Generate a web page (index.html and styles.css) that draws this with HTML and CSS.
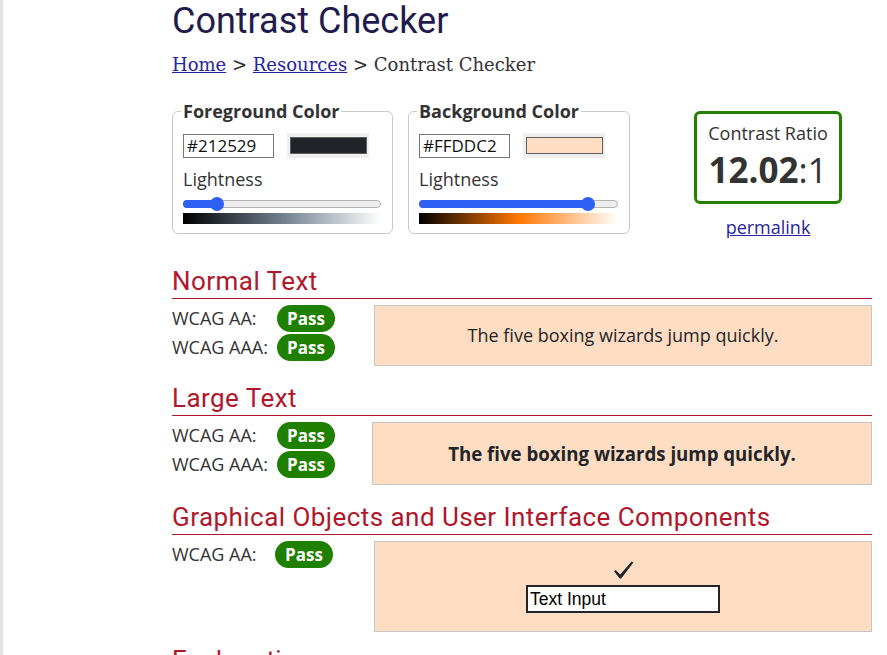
FILE: index.html
```html
<!DOCTYPE html>
<html lang="en">
<head>
<meta charset="utf-8">
<title>Contrast Checker</title>
<link rel="stylesheet" href="styles.css">
</head>
<body>
<main class="page">
  <h1 class="title">Contrast Checker</h1>
  <nav class="crumbs"><a href="#">Home</a> &gt; <a href="#">Resources</a> &gt; Contrast Checker</nav>

  <div class="picker-row">
    <fieldset class="picker">
      <legend>Foreground Color</legend>
      <div class="picker-inputs">
        <input class="hex" type="text" value="#212529">
        <div class="swatch"><span class="swatch-chip" style="background:#212529"></span></div>
      </div>
      <div class="label">Lightness</div>
      <div class="slider">
        <div class="slider-fill" style="width:calc((100% - 14px) * .15 + 7px)"></div>
        <div class="slider-thumb" style="left:calc((100% - 14px) * .15)"></div>
      </div>
      <div class="ramp ramp-fg"></div>
    </fieldset>

    <fieldset class="picker picker-bg">
      <legend>Background Color</legend>
      <div class="picker-inputs">
        <input class="hex" type="text" value="#FFDDC2">
        <div class="swatch"><span class="swatch-chip" style="background:#FFDDC2"></span></div>
      </div>
      <div class="label">Lightness</div>
      <div class="slider">
        <div class="slider-fill" style="width:calc((100% - 14px) * .885 + 7px)"></div>
        <div class="slider-thumb" style="left:calc((100% - 14px) * .885)"></div>
      </div>
      <div class="ramp ramp-bg"></div>
    </fieldset>

    <div class="ratio-col">
      <div class="ratio-box">
        <div class="ratio-label">Contrast Ratio</div>
        <div class="ratio-value"><b>12.02</b>:1</div>
      </div>
      <a class="permalink" href="#">permalink</a>
    </div>
  </div>

  <section class="section section-first">
    <h2 class="section-title">Normal Text</h2>
    <div class="result-row">
      <div class="verdicts">
        <span class="verdict-label">WCAG AA:</span><span class="badge">Pass</span>
        <span class="verdict-label">WCAG AAA:</span><span class="badge">Pass</span>
      </div>
      <div class="sample">The five boxing wizards jump quickly.</div>
    </div>
  </section>

  <section class="section">
    <h2 class="section-title">Large Text</h2>
    <div class="result-row">
      <div class="verdicts verdicts-large">
        <span class="verdict-label">WCAG AA:</span><span class="badge">Pass</span>
        <span class="verdict-label">WCAG AAA:</span><span class="badge">Pass</span>
      </div>
      <div class="sample sample-large">The five boxing wizards jump quickly.</div>
    </div>
  </section>

  <section class="section">
    <h2 class="section-title">Graphical Objects and User Interface Components</h2>
    <div class="result-row">
      <div class="verdicts verdicts-ui">
        <span class="verdict-label">WCAG AA:</span><span class="badge">Pass</span>
      </div>
      <div class="sample sample-ui">
        <svg class="check" width="21" height="18" viewBox="0 0 21 18" aria-hidden="true">
          <path d="M1 10.2 L2.6 8.9 L7.2 13.4 L18.6 0.6 L20.4 1.6 L8.2 17.6 L6.6 17.6 Z" fill="#212529"/>
        </svg>
        <input class="ui-input" type="text" value="Text Input">
      </div>
    </div>
  </section>

  <section class="section section-last">
    <h2 class="section-title">Explanation</h2>
  </section>
</main>
</body>
</html>
```

FILE: styles.css
```css
* {
  box-sizing: border-box;
}

html,
body {
  margin: 0;
  padding: 0;
  background: #fff;
}

body {
  font-family: "Open Sans", "Liberation Sans", sans-serif;
  font-size: 18px;
  color: #333;
  border-left: 3px solid #e3e3e3;
  min-height: 100vh;
}

.page {
  margin-left: 169px;
  width: 700px;
}

.title {
  margin: 0;
  font-family: Roboto, "Liberation Sans", sans-serif;
  font-weight: 400;
  font-size: 36px;
  line-height: 43px;
  color: #1f1b4f;
}

.crumbs {
  margin-top: 11px;
  font-family: "DejaVu Serif", "Liberation Serif", serif;
  font-size: 18px;
  line-height: 21px;
  color: #333;
}

.crumbs a {
  color: #2525a0;
}

/* colour pickers */
.picker-row {
  display: flex;
  align-items: flex-start;
  margin-top: 24px;
}

.picker {
  margin: 0;
  width: 221px;
  border: 1px solid #c9c9c9;
  border-radius: 6px;
  padding: 10px 11px 9px 10px;
  min-width: 0;
}

.picker-bg {
  margin-left: 15px;
  width: 222px;
}

.picker legend {
  padding: 0 2px;
  margin-left: -2px;
  font-weight: 700;
  font-size: 18px;
  color: #333;
}

.picker-inputs {
  display: flex;
  align-items: center;
  gap: 13px;
}

.hex {
  width: 91px;
  height: 24px;
  margin: 0;
  padding: 0 3px;
  border: 1px solid #767676;
  border-radius: 0;
  font-family: "Open Sans", "Liberation Sans", sans-serif;
  font-size: 17px;
  color: #111;
  background: #fff;
}

.swatch {
  display: flex;
  width: 82px;
  height: 25px;
  padding: 4px 2px 4px 3px;
  background: #efefef;
}

.swatch-chip {
  flex: 1;
  border: 1px solid #5f5f5f;
}

.label {
  margin-top: 9px;
  line-height: 24px;
}

.slider {
  position: relative;
  margin-top: 9px;
  height: 8px;
  border: 1px solid #b3b3b3;
  border-radius: 4px;
  background: #ececec;
}

.slider-fill {
  height: 8px;
  margin: -1px 0 0 -1px;
  border-radius: 4px 0 0 4px;
  background: #2f60f6;
}

.slider-thumb {
  position: absolute;
  top: -4px;
  width: 14px;
  height: 14px;
  margin-left: -1px;
  border-radius: 50%;
  background: #2f60f6;
}

.ramp {
  margin-top: 5px;
  height: 11px;
}

.ramp-fg {
  background: linear-gradient(90deg, #000 0%, #717f8e 50%, #fff 100%);
}

.ramp-bg {
  background: linear-gradient(90deg, #000 0%, #ff7700 50%, #fff 100%);
}

/* ratio */
.ratio-col {
  margin-left: 64px;
  margin-top: 12px;
  width: 148px;
  display: flex;
  flex-direction: column;
  align-items: center;
}

.ratio-box {
  width: 148px;
  border: 3px solid #218000;
  border-radius: 6px;
  padding: 7px 0 8px;
  text-align: center;
  color: #333;
}

.ratio-label {
  line-height: 25px;
}

.ratio-value {
  font-size: 35px;
  line-height: 47px;
  font-weight: 400;
}

.ratio-value b {
  font-weight: 700;
}

.permalink {
  margin-top: 11px;
  line-height: 25px;
  color: #2525a0;
}

/* result sections */
.section {
  margin-top: 17px;
}

.section-first {
  margin-top: 26px;
}

.section-last {
  margin-top: 13px;
}

.section-title {
  margin: 0 0 6px;
  padding-bottom: 2px;
  border-bottom: 1px solid #b0172b;
  font-family: Roboto, "Liberation Sans", sans-serif;
  font-weight: 400;
  font-size: 26px;
  letter-spacing: 0.45px;
  line-height: 30px;
  color: #b0172b;
}

.result-row {
  display: flex;
  align-items: flex-start;
}

.verdicts {
  width: 202px;
  flex: none;
  display: grid;
  grid-template-columns: 105px auto;
  row-gap: 2px;
  align-items: center;
  justify-items: start;
}

.verdicts-large {
  width: 200px;
}

.verdicts-ui {
  grid-template-columns: 103px auto;
}

.verdict-label {
  line-height: 27px;
  color: #333;
}

.badge {
  height: 27px;
  line-height: 27px;
  padding: 0 10px;
  border-radius: 14px;
  background: #1f8000;
  color: #fff;
  font-weight: 700;
  font-size: 17px;
}

.sample {
  flex: 1;
  background: #FFDDC2;
  border: 1px solid #c6c6c6;
  color: #212529;
  text-align: center;
  padding: 17px 10px;
  line-height: 25px;
}

.sample-large {
  font-weight: 700;
  font-size: 18.66px;
  line-height: 27px;
}

.sample-ui {
  display: flex;
  flex-direction: column;
  align-items: center;
  padding: 19px 0 18px;
}

.check {
  display: block;
  margin-bottom: 6px;
}

.ui-input {
  width: 194px;
  height: 28px;
  margin: 0;
  padding: 0 2px;
  border: 2px solid #212529;
  border-radius: 0;
  background: #fff;
  font-family: "Liberation Sans", Arial, sans-serif;
  font-size: 17.5px;
  color: #000;
}
```
